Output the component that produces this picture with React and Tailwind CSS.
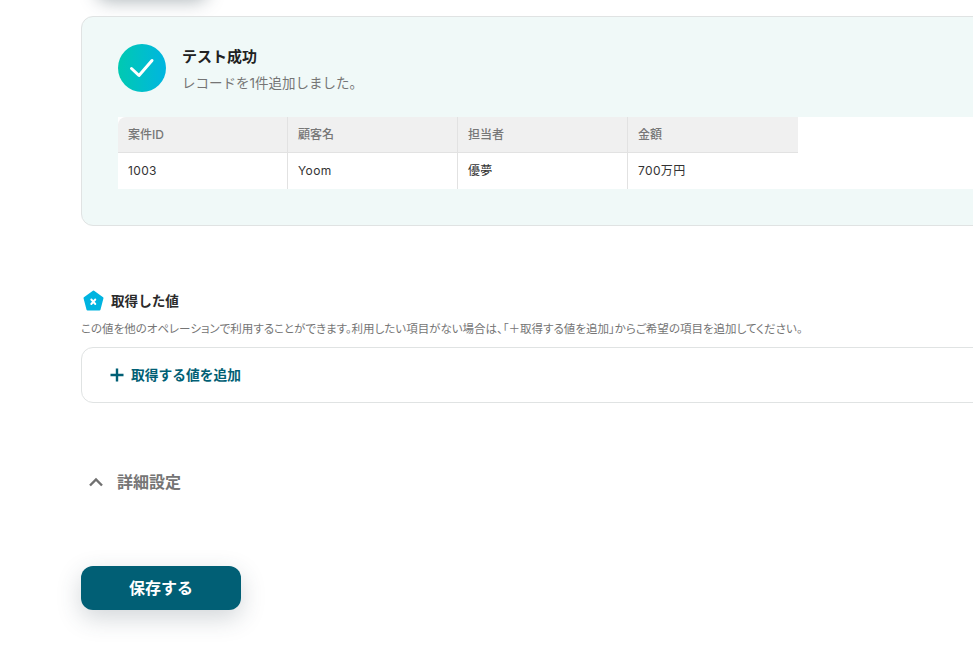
function Th({ children, last }) {
  return (
    <div className={`w-[170px] h-[36px] flex items-center pl-[10px] bg-[#f0f0f0] border-b border-[#e2e2e2] text-[12px] font-medium text-[#777777] ${last ? "" : "border-r"}`}>
      {children}
    </div>
  );
}
function Td({ children, last }) {
  return (
    <div className={`w-[170px] h-[36px] flex items-center pl-[10px] text-[12px] text-[#333333] tracking-[0.03em] ${last ? "" : "border-r border-[#e2e2e2]"}`}>
      {children}
    </div>
  );
}
export default function App() {
  return (
    <div className="relative h-[656px] w-full overflow-hidden bg-white pl-[81px] font-['Inter','Noto_Sans_CJK_JP',sans-serif]">
      <div className="-mt-[40px] ml-[16px] h-[36px] w-[110px] rounded-[10px] bg-white shadow-[0_5px_18px_rgba(50,70,80,0.4)]" />
      <div className="mt-[20px] -mr-[20px] h-[210px] rounded-[12px] border border-[#e0e3e3] bg-[#f0f9f8] pl-[36px] pt-[27px]">
        <div className="flex">
          <div className="flex h-[48px] w-[48px] items-center justify-center rounded-full bg-gradient-to-r from-[#00c9b1] to-[#00b5e0]">
            <svg width="26" height="22" viewBox="0 0 26 22" fill="none">
              <path d="M2.5 11.5 L10 18.5 L23 3.5" stroke="white" strokeWidth="3" strokeLinecap="round" strokeLinejoin="round" />
            </svg>
          </div>
          <div className="ml-[16px]">
            <div className="mt-[2px] text-[15px] font-bold leading-[22px] text-[#222222]">テスト成功</div>
            <div className="mt-[5px] text-[13.5px] leading-[20px] text-[#757575]">レコードを1件追加しました。</div>
          </div>
        </div>
        <div className="mt-[24px] bg-white">
          <div className="flex">
            <div className="flex overflow-hidden rounded-tl-[8px]">
              <Th>案件ID</Th>
              <Th>顧客名</Th>
              <Th>担当者</Th>
              <Th last>金額</Th>
            </div>
          </div>
          <div className="flex">
            <Td>1003</Td>
            <Td>Yoom</Td>
            <Td>優夢</Td>
            <Td last>700万円</Td>
          </div>
        </div>
      </div>
      <div className="mt-[64px] flex h-[22px] items-center">
        <svg width="23" height="22" viewBox="0 0 23 22" className="ml-[1px]">
          <path d="M11.5 1.5 L20.5 8 L17.5 19.5 L5.5 19.5 L2.5 8 Z" fill="#00b4e0" stroke="#00b4e0" strokeWidth="2" strokeLinejoin="round" />
          <path d="M9.3 9.5 L13.3 14 M13.3 9.5 L9.3 14" stroke="white" strokeWidth="1.9" strokeLinecap="round" />
        </svg>
        <span className="ml-[6px] text-[13.6px] font-bold text-[#2b2b2b]">取得した値</span>
      </div>
      <div className="mt-[9px] whitespace-nowrap text-[11.5px] leading-[16px] text-[#757575] [font-feature-settings:'palt']">
        この値を他のオペレーションで利用することができます。利用したい項目がない場合は、「＋取得する値を追加」からご希望の項目を追加してください。
      </div>
      <div className="mt-[10px] -mr-[20px] flex h-[56px] items-center rounded-[12px] border border-[#e0e3e3] pl-[27px]">
        <svg width="16" height="16" viewBox="0 0 16 16" fill="none">
          <path d="M8 1.5 V14.5 M1.5 8 H14.5" stroke="#015f75" strokeWidth="2.4" />
        </svg>
        <span className="ml-[6px] text-[13.75px] font-bold text-[#015f75]">取得する値を追加</span>
      </div>
      <div className="mt-[68px] flex h-[22px] items-center">
        <svg width="16" height="10" viewBox="0 0 16 10" fill="none" className="ml-[7px]">
          <path d="M2 8.5 L8 2.5 L14 8.5" stroke="#707070" strokeWidth="2.4" />
        </svg>
        <span className="ml-[13px] text-[16px] font-bold text-[#757575]">詳細設定</span>
      </div>
      <button className="mt-[73px] flex h-[44px] w-[160px] items-center justify-center rounded-[12px] bg-[#015f75] text-[16px] font-bold text-white shadow-[0_8px_24px_rgba(50,70,80,0.22)]">
        保存する
      </button>
    </div>
  );
}
